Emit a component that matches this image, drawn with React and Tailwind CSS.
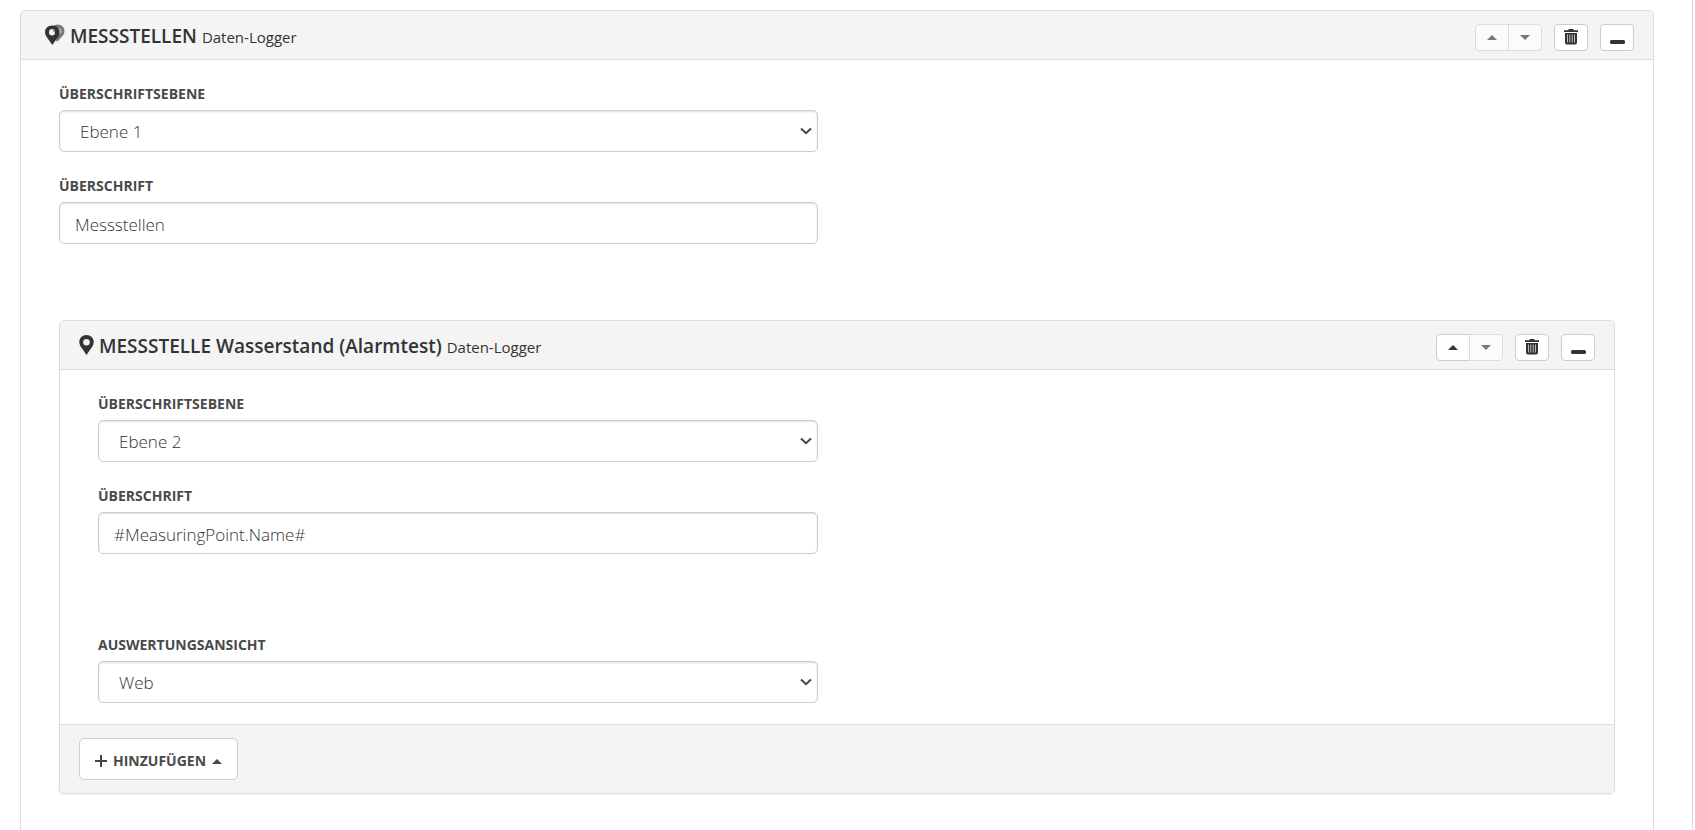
import { useId } from "react";
import clsx from "clsx";

const controlClasses =
  "w-full h-[42px] rounded-[5px] border border-[#ccc] bg-white pt-0.5 text-[17px] font-light text-[#333] shadow-[inset_0_1px_2px_rgba(0,0,0,0.12)] focus:outline-none focus:border-gray-500";

const PinIcon = () => (
  <svg width="16" height="22" viewBox="0 0 16 22" fill="#333">
    <path
      fillRule="evenodd"
      d="M7.500 1C3.400 1 .3 4 .3 7.900c0 2.500 1.300 4.500 3 6.900L7.500 21l4.200-6.200c1.700-2.400 3-4.400 3-6.900C14.700 4 11.600 1 7.500 1zm0 3.900a3.300 3.300 0 1 1 0 6.600 3.300 3.300 0 0 1 0-6.600z"
    />
  </svg>
);

const PinsIcon = () => (
  <svg width="26" height="22" viewBox="-4 0 26 22">
    <path
      fill="#777"
      d="M13.500.5C9.700.5 7 3.300 7 7.200c0 3.300 2.500 5.300 5.500 9.800l1 .5c3.300-4 7-6.500 7-10.300 0-3.900-3-6.700-7-6.700z"
    />
    <circle cx="14.500" cy="7.200" r="3" fill="#bbb" />
    <path
      fill="#333"
      d="M8 1.500C4 1.500 1 4.400 1 8.100c0 2.300 1.200 4.200 2.900 6.600L8.400 21l4.300-6.300c1.700-2.400 2.900-4.300 2.900-6.600 0-3.700-3.300-6.600-7.600-6.600z"
    />
    <ellipse cx="8" cy="8.200" rx="3" ry="3.200" fill="#f4f4f4" />
    <path fill="#888" d="M8.700 5a3 3.200 0 0 1 2.200 3.800C9.500 8 8.700 6.700 8.700 5z" />
  </svg>
);

const TrashIcon = () => (
  <svg width="14" height="16" viewBox="0 0 14 16" fill="#333">
    <path d="M4.500 0h5v1.200H14V3H0V1.200h4.500z" />
    <path d="M1 4h12v9.500c0 1.200-.8 2-2 2H3c-1.200 0-2-.8-2-2z" />
    <path fill="#bbb" d="M3 5.500h1v8H3zM5.300 5.500h1v8h-1zM7.700 5.500h1v8h-1zM10 5.500h1v8h-1z" />
  </svg>
);

const MinusIcon = () => (
  <svg width="15" height="16" viewBox="0 0 15 16">
    <rect y="11" width="15" height="4" rx="1.500" fill="#333" />
  </svg>
);

const PlusIcon = () => (
  <svg width="12" height="12" viewBox="0 0 12 12" stroke="#444" strokeWidth="2">
    <path d="M6 0v12M0 6h12" />
  </svg>
);

const Caret = ({ down = false }) => (
  <svg width="10" height="5" viewBox="0 0 10 5" fill="currentColor">
    <path d={down ? "M0 0h10L5 5z" : "M0 5h10L5 0z"} />
  </svg>
);

const ToolButton = ({ label, className, children, ...props }) => (
  <button
    type="button"
    aria-label={label}
    className={clsx(
      "flex h-[27px] w-[34px] items-center justify-center border border-[#ccc] bg-white text-[#333] disabled:border-[#ddd] disabled:bg-[#fbfbfb] disabled:text-[#777]",
      className,
    )}
    {...props}
  >
    {children}
  </button>
);

const Panel = ({ icon, title, canMoveUp = false, footer, className, children }) => (
  <section
    className={clsx("rounded-[5px] border border-[#ddd] bg-white shadow-xs", className)}
  >
    <header className="flex h-12 items-center justify-between rounded-t-[4px] bg-[#f4f4f4] pr-[19px] text-[#333]">
      <div className="flex items-center gap-1 pl-[19px]">
        {icon}
        <h2 className="pt-0.5 text-[19px] leading-6 font-semibold">
          {title} <small className="text-[15px] font-normal">Daten-Logger</small>
        </h2>
      </div>
      <div className="flex gap-3 pt-1">
        <div className="flex">
          <ToolButton label="Nach oben" className="rounded-l-[4px]" disabled={!canMoveUp}>
            <Caret />
          </ToolButton>
          {/* the two arrows share one border */}
          <ToolButton label="Nach unten" className="-ml-px rounded-r-[4px]" disabled>
            <Caret down />
          </ToolButton>
        </div>
        <ToolButton label="Löschen" className="rounded-[4px]">
          <TrashIcon />
        </ToolButton>
        <ToolButton label="Einklappen" className="rounded-[4px]">
          <MinusIcon />
        </ToolButton>
      </div>
    </header>
    <div className="border-t border-[#ddd] px-[38px] pt-6 pb-[21px]">{children}</div>
    {footer && (
      <footer className="rounded-b-[4px] border-t border-[#ddd] bg-[#f4f4f4] px-[19px] py-[13px]">
        {footer}
      </footer>
    )}
  </section>
);

const Field = ({ id, label, children }) => (
  <div className="w-1/2 pr-[19px]">
    <label htmlFor={id} className="block pb-1.5 text-sm leading-5 font-bold text-[#4a4a4a] uppercase">
      {label}
    </label>
    {children}
  </div>
);

const SelectField = ({ label, options, value }) => {
  const id = useId();
  return (
    <Field id={id} label={label}>
      <div className="relative">
        <select
          id={id}
          defaultValue={value}
          className={clsx(controlClasses, "appearance-none pr-8 pl-5")}
        >
          {options.map((option) => (
            <option key={option}>{option}</option>
          ))}
        </select>
        <svg
          className="pointer-events-none absolute inset-y-0 right-1.5 my-auto"
          width="12"
          height="8"
          viewBox="0 0 12 8"
          fill="none"
          stroke="#444"
          strokeWidth="2"
        >
          <path d="M1 1.500l5 4.700 5-4.700" />
        </svg>
      </div>
    </Field>
  );
};

const TextField = ({ label, value }) => {
  const id = useId();
  return (
    <Field id={id} label={label}>
      <input id={id} type="text" defaultValue={value} className={clsx(controlClasses, "px-[15px]")} />
    </Field>
  );
};

const levels = ["Ebene 1", "Ebene 2", "Ebene 3"];

const App = () => (
  <div className="min-h-screen bg-white pr-0.5 font-['Open_Sans',sans-serif]">
    <div className="min-h-screen border-r border-[#ddd] pt-2.5 pr-[38px] pl-5">
      <Panel icon={<PinsIcon />} title="MESSSTELLEN" className="min-h-[860px]">
        <div className="flex flex-col gap-6">
          <SelectField label="Überschriftsebene" options={levels} value="Ebene 1" />
          <TextField label="Überschrift" value="Messstellen" />
        </div>
        <Panel
          icon={<PinIcon />}
          title="MESSSTELLE Wasserstand (Alarmtest)"
          canMoveUp
          className="mt-[76px]"
          footer={
            <button
              type="button"
              className="flex h-[42px] items-center gap-1.5 rounded-[5px] border border-[#ccc] bg-white px-[15px] pt-1 text-sm font-bold text-[#4a4a4a] uppercase"
            >
              <PlusIcon />
              Hinzufügen
              <Caret />
            </button>
          }
        >
          <div className="flex flex-col gap-6">
            <SelectField label="Überschriftsebene" options={levels} value="Ebene 2" />
            <TextField label="Überschrift" value="#MeasuringPoint.Name#" />
          </div>
          <div className="mt-[81px]">
            <SelectField label="Auswertungsansicht" options={["Web", "PDF"]} value="Web" />
          </div>
        </Panel>
      </Panel>
    </div>
  </div>
);

export default App;
